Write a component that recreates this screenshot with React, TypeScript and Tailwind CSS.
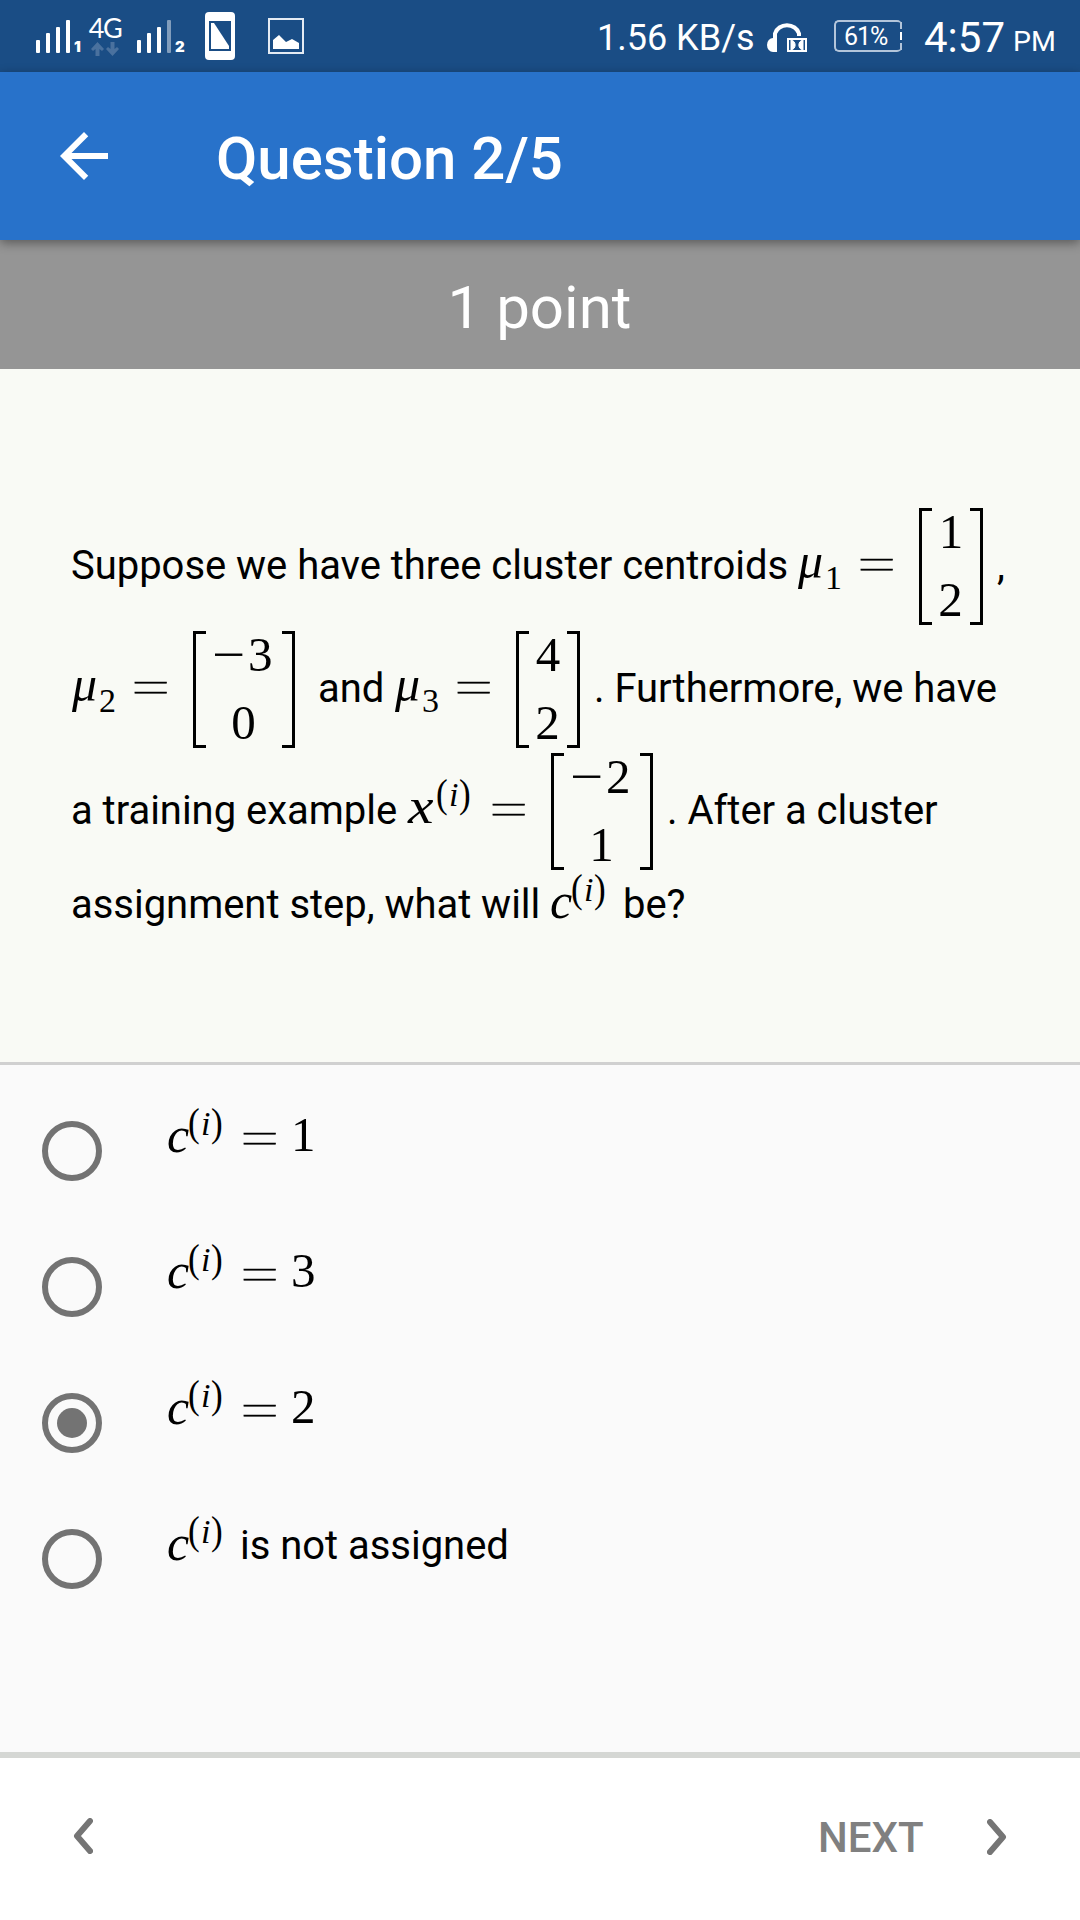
import type { ReactNode } from "react";

const SERIF = "font-['Liberation_Serif',serif]";

/* Plain prose inside a line; the baseline sits about 70px below the line's top. */
function Prose({ className, children }: { className: string; children: ReactNode }) {
  return (
    <span className={`shrink-0 whitespace-pre text-[40px] leading-[48px] tracking-[-0.03px] ${className}`}>
      {children}
    </span>
  );
}

function Variable({ className, children }: { className: string; children: ReactNode }) {
  return (
    <span className={`${SERIF} mt-[23px] shrink-0 origin-left text-[50px] italic leading-[60px] ${className}`}>
      {children}
    </span>
  );
}

function Mu({ sub, className }: { sub: string; className: string }) {
  return (
    <span className={`flex shrink-0 ${className}`}>
      <Variable className="w-7">μ</Variable>
      <sub className={`${SERIF} top-0 -ml-px mt-[50px] text-[34px] leading-10`}>{sub}</sub>
    </span>
  );
}

function SuperI({ className }: { className: string }) {
  return (
    <sup className={`${SERIF} top-0 flex w-9 shrink-0 ${className}`}>
      <span className="mt-[17px] w-[13px] origin-left scale-x-90 text-[39px] leading-[48px]">(</span>
      <span className="mt-[22px] w-3 text-[34px] italic leading-10">i</span>
      <span className="mt-[17px] origin-left scale-x-90 text-[39px] leading-[48px]">)</span>
    </sup>
  );
}

function Equals({ className }: { className: string }) {
  return (
    <span className={`mt-[22px] flex w-8 shrink-0 scale-x-120 scale-y-75 justify-center text-[64px] font-thin leading-[70px] [-webkit-text-stroke:0.8px_black] ${className}`}>
      =
    </span>
  );
}

function Matrix({ top, bottom, negative, className }: { top: string; bottom: string; negative?: boolean; className: string }) {
  return (
    <span className={`flex h-[117px] shrink-0 justify-between ${className}`}>
      <span className="w-[13px] border-y-3 border-l-3 border-black" />
      <span className={`${SERIF} -mt-[10px] flex flex-col items-center text-[49px] leading-[68px]`}>
        <span className="flex whitespace-nowrap">
          {negative && <span className="mr-[5px] scale-x-120">−</span>}
          {top}
        </span>
        <span className="pr-px">{bottom}</span>
      </span>
      <span className="w-[13px] border-y-3 border-r-3 border-black" />
    </span>
  );
}

function Option({ checked, children }: { checked?: boolean; children: ReactNode }) {
  return (
    <label className="flex h-[136px] items-start pl-[42px]">
      <span className="mt-[39px] flex size-[60px] shrink-0 items-center justify-center rounded-full border-6 border-[#737373]">
        {checked && <span className="size-[30px] rounded-full bg-[#737373]" />}
      </span>
      <Variable className="ml-[65px] w-[21px]">c</Variable>
      <SuperI className="" />
      {children}
    </label>
  );
}

function Value({ children }: { children: ReactNode }) {
  return (
    <>
      <Equals className="ml-5" />
      <span className={`${SERIF} ml-[15px] mt-[23px] text-[49px] leading-[60px]`}>{children}</span>
    </>
  );
}

function Signal({ weak, label }: { weak?: boolean; label: string }) {
  return (
    <span className="flex h-9 items-end">
      <svg width="34" height="33" viewBox="0 0 34 33" fill="#fff">
        <rect x="0" y="20" width="4" height="13" rx="1" />
        <rect x="10" y="13" width="4" height="20" rx="1" />
        <rect x="20" y="7" width="4" height="26" rx="1" />
        <rect x="30" y="0" width="4" height="33" rx="1" opacity={weak ? 0.45 : 1} />
      </svg>
      <span className="-mb-[2px] ml-1 w-[10px] font-['Inter',sans-serif] text-[15px] font-black leading-[17px]">{label}</span>
    </span>
  );
}

export default function App() {
  return (
    <div className="flex h-[1920px] w-[1080px] flex-col overflow-hidden bg-[#fafafa] font-['Roboto',sans-serif] text-black">
      <div className="flex h-[72px] shrink-0 items-start bg-[#1a4d85] text-white">
        <div className="ml-9 mt-[17px] flex">
          <Signal label="1" />
        </div>
        <div className="ml-[5px] mt-4 flex w-8 flex-col items-center">
          <span className="font-['Lato',sans-serif] text-[27px] leading-6 tracking-[-1.5px]">4G</span>
          <svg className="mt-[2px]" width="28" height="14" viewBox="0 0 28 14" fill="#4a719e">
            <path d="M6.5 0 13 7 11 9 8.500 7V14H4.500V7L2 9 0 7Z" />
            <path d="M21.500 14 28 7 26 5 23.500 7V0H19.500V7L17 5 15 7Z" />
          </svg>
        </div>
        <div className="ml-4 mt-[17px] flex">
          <Signal weak label="2" />
        </div>
        <svg className="ml-5 mt-3" width="30" height="48" viewBox="0 0 30 48">
          <rect width="30" height="48" rx="4" fill="#fff" />
          <rect x="4" y="9" width="22" height="30" fill="#1a4d85" />
          <path d="M6 11V37H24V34L9 11Z" fill="#fff" />
        </svg>
        <svg className="ml-[33px] mt-[18px]" width="36" height="36" viewBox="0 0 36 36">
          <rect x="1" y="1" width="34" height="34" fill="none" stroke="#e4ebf3" strokeWidth="2" />
          <path d="M5 31V22L11 17 18 24 24 21 31 25V31Z" fill="#fff" />
        </svg>
        <span className="ml-[293px] mt-[17px] w-[170px] whitespace-nowrap text-[36px] leading-[42px]">1.56 KB/s</span>
        <svg className="mt-5" width="40" height="32" viewBox="0 0 40 32">
          <path d="M8 27V13.500A12.500 11.500 0 0 1 32 13.500V16" fill="none" stroke="#fff" strokeWidth="4" />
          <path d="M10 18V32H6A6 7 0 0 1 6 18Z" fill="#fff" />
          <rect x="21" y="19" width="18" height="12" fill="#1a4d85" stroke="#fff" strokeWidth="2" />
          <path d="M24 20C29.500 21 29.500 29 24 30ZM36 20C30.500 21 30.500 29 36 30Z" fill="#fff" stroke="#fff" />
        </svg>
        <div className="ml-[27px] mt-5 flex h-8 w-[68px] items-center justify-between rounded-[5px] border-2 border-r-0 border-[#b3c5da] pl-2">
          <span className="mt-[2px] text-[25px] leading-7 tracking-[-1px]">61%</span>
          <span className="flex h-full w-[2px] flex-col justify-between">
            <span className="h-[7px] bg-[#b3c5da]" />
            <span className="h-2 bg-white" />
            <span className="h-[7px] bg-[#b3c5da]" />
          </span>
        </div>
        <span className="ml-[22px] mt-[13px] w-[89px] text-[42px] leading-[50px]">4:57</span>
        <span className="mt-6 text-[28.5px] leading-9">PM</span>
      </div>

      <header className="relative flex h-[168px] shrink-0 items-start bg-[#2872ca] text-white shadow-[0_3px_10px_rgba(0,0,0,0.4)]">
        <svg className="ml-12 mt-12" width="72" height="72" viewBox="0 0 24 24" fill="#fff">
          <path d="M20 11H7.830l5.590-5.590L12 4l-8 8 8 8 1.410-1.410L7.830 13H20v-2z" />
        </svg>
        <h1 className="ml-24 mt-[52px] text-[60px] font-medium leading-[70px]">Question 2/5</h1>
      </header>

      <div className="flex h-[129px] shrink-0 justify-center bg-[#959595] pr-px pt-[33px] text-[60px] leading-[70px] text-white">1 point</div>

      <main className="h-[696px] shrink-0 border-b-3 border-[#d0d0d0] bg-[#f9faf5] pl-[71px] pt-[139px]">
        <div className="flex h-[123px] items-start">
          <Prose className="mt-[34px] w-[727px]">Suppose we have three cluster centroids</Prose>
          <Mu sub="1" className="w-[63px]" />
          <Equals className="" />
          <Matrix top="1" bottom="2" className="ml-[26px] w-16" />
          <Prose className="ml-[14px] mt-[34px]">,</Prose>
        </div>
        <div className="flex h-[122px] items-start">
          <Mu sub="2" className="ml-px w-[63px]" />
          <Equals className="" />
          <Matrix negative top="3" bottom="0" className="ml-[26px] w-[102px]" />
          <Prose className="ml-[23px] mt-[34px] w-[77px]">and</Prose>
          <Mu sub="3" className="w-[63px]" />
          <Equals className="" />
          <Matrix top="4" bottom="2" className="ml-[26px] w-16" />
          <Prose className="ml-[14px] mt-[34px]">. Furthermore, we have</Prose>
        </div>
        <div className="flex h-[122px] items-start">
          <Prose className="mt-[34px] w-[337px]">a training example</Prose>
          <Variable className="w-7 scale-x-115">x</Variable>
          <SuperI className="" />
          <Equals className="ml-[21px]" />
          <Matrix negative top="2" bottom="1" className="ml-[26px] w-[102px]" />
          <Prose className="ml-[14px] mt-[34px]">. After a cluster</Prose>
        </div>
        <div className="-mt-[27px] flex h-[122px] items-start">
          <Prose className="mt-[33px] w-[479px]">assignment step, what will</Prose>
          <Variable className="w-[21px]">c</Variable>
          <SuperI className="" />
          <Prose className="ml-4 mt-[33px]">be?</Prose>
        </div>
      </main>

      <section className="h-[687px] shrink-0 pt-[17px]">
        <Option><Value>1</Value></Option>
        <Option><Value>3</Value></Option>
        <Option checked><Value>2</Value></Option>
        <Option><Prose className="ml-4 mt-8">is not assigned</Prose></Option>
      </section>

      <footer className="flex h-[168px] shrink-0 items-start border-t-6 border-[#d5d7d4] bg-white text-[#808080]">
        <svg className="ml-[73px] mt-[60px]" width="20" height="36" viewBox="0 0 20 36" fill="none" stroke="#757575" strokeWidth="6" strokeLinecap="round" strokeLinejoin="round">
          <path d="M17 3 4 18 17 33" />
        </svg>
        <span className="ml-[725px] mt-[55px] w-[169px] text-[42px] font-medium leading-[50px]">NEXT</span>
        <svg className="mt-[61px]" width="20" height="36" viewBox="0 0 20 36" fill="none" stroke="#757575" strokeWidth="6" strokeLinecap="round" strokeLinejoin="round">
          <path d="M3 3 16 18 3 33" />
        </svg>
      </footer>
    </div>
  );
}
